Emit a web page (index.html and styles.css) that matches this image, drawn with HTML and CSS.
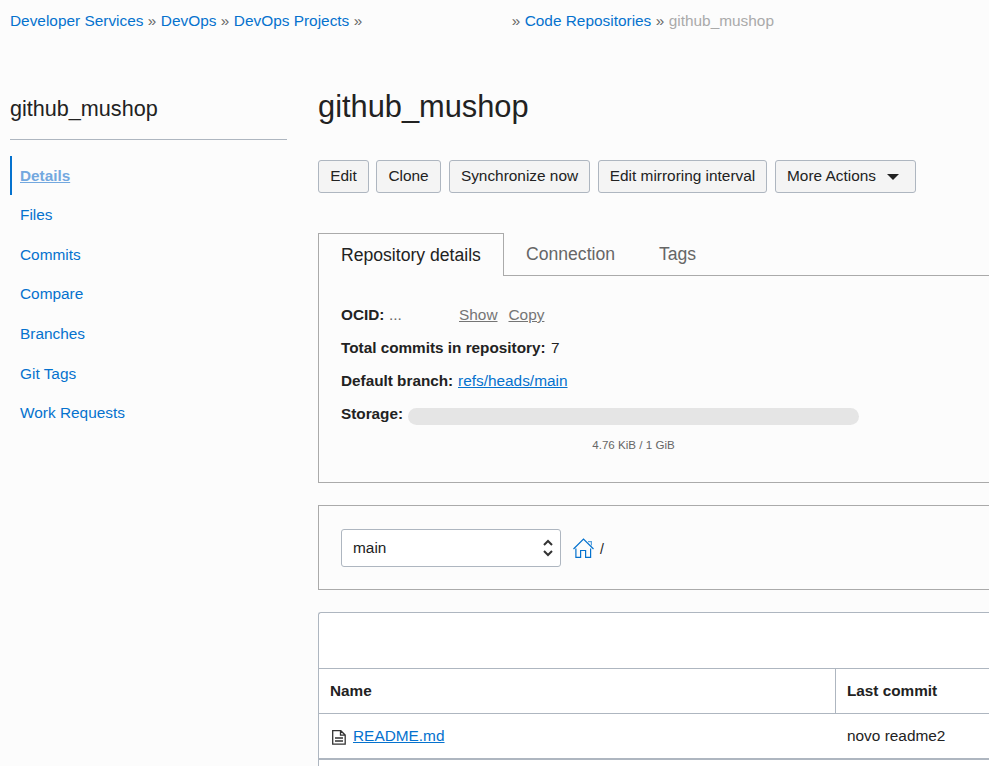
FILE: index.html
```html
<!DOCTYPE html>
<html lang="en">
<head>
<meta charset="utf-8">
<title>github_mushop</title>
<link rel="stylesheet" href="styles.css">
</head>
<body>
<nav class="breadcrumb">
  <a href="#">Developer Services</a><span class="sep">»</span><a href="#">DevOps</a><span class="sep">»</span><a href="#">DevOps Projects</a><span class="sep">»</span><span class="project"></span><span class="sep">»</span><a href="#">Code Repositories</a><span class="sep">»</span><span class="current">github_mushop</span>
</nav>
<div class="layout">
  <aside class="sidebar">
    <h2>github_mushop</h2>
    <ul class="menu">
      <li class="active"><a href="#">Details</a></li>
      <li><a href="#">Files</a></li>
      <li><a href="#">Commits</a></li>
      <li><a href="#">Compare</a></li>
      <li><a href="#">Branches</a></li>
      <li><a href="#">Git Tags</a></li>
      <li><a href="#">Work Requests</a></li>
    </ul>
  </aside>
  <main class="content">
    <h1>github_mushop</h1>
    <div class="actions">
      <button class="edit">Edit</button>
      <button class="clone">Clone</button>
      <button class="sync">Synchronize now</button>
      <button class="mirror">Edit mirroring interval</button>
      <button class="more">More Actions<svg class="caret" width="12" height="6" viewBox="0 0 12 6"><path d="M0 0H12L6 6Z" fill="#222"/></svg></button>
    </div>
    <div class="tabs">
      <div class="tab selected">Repository details</div>
      <div class="tab connection">Connection</div>
      <div class="tab">Tags</div>
    </div>
    <section class="details">
      <div class="row"><b class="ocid">OCID:</b><span class="dots">...</span><a class="muted show" href="#">Show</a><a class="muted" href="#">Copy</a></div>
      <div class="row"><b class="total">Total commits in repository:</b><span>7</span></div>
      <div class="row"><b class="branch">Default branch:</b><a class="link" href="#">refs/heads/main</a></div>
      <div class="row"><b class="storage">Storage:</b><div class="meter"></div></div>
      <div class="usage">4.76 KiB / 1 GiB</div>
    </section>
    <section class="path">
      <div class="select"><span>main</span>
        <svg width="10" height="18" viewBox="0 0 10 18" fill="none" stroke="#333" stroke-width="2"><path d="M1 6L5 2L9 6M1 12L5 16L9 12"/></svg>
      </div>
      <svg class="home" width="21" height="21" viewBox="0 0 21 21" fill="none" stroke="#0572ce" stroke-width="1.2"><path d="M.5 11L10.5 1L20.5 11M2.9 10.5V19.4H7.6V12.5H12.6V19.4H17.6V10.5"/><path d="M15 3.6H18.4V7.5" stroke-opacity=".65"/></svg>
      <span class="slash">/</span>
    </section>
    <section class="files">
      <div class="toolbar"></div>
      <div class="grid head"><div>Name</div><div class="commit">Last commit</div></div>
      <div class="grid file"><div><svg width="14" height="15" viewBox="0 0 14 15" fill="none" stroke="#333" stroke-width="1.3"><path d="M.7 .7H8.8L13.2 5V14.2H.7ZM8.5 .7V5.2H13.2M3 8H11M3 11H11"/></svg><a class="link" href="#">README.md</a></div><div class="commit">novo readme2</div></div>
      <div class="footer"></div>
    </section>
  </main>
</div>
</body>
</html>
```

FILE: styles.css
```css
* { box-sizing: border-box; }
html { overflow: hidden; }
body {
  margin: 0;
  height: 766px;
  overflow: hidden;
  background: #fcfcfc;
  color: #222;
  font: 15.4px/20px "Liberation Sans", Arial, sans-serif;
}
a { color: #0572ce; text-decoration: none; }
h1, h2 { margin: 0; font-weight: 400; }
b { font-size: 15.3px; }

.breadcrumb { display: flex; height: 41px; padding: 11px 0 0 10px; white-space: nowrap; }
.sep { width: 17.4px; text-align: center; color: #666; }
.project { width: 140.6px; }
.current { color: #aaa; }

.layout { display: grid; grid-template-columns: 277px 1fr; column-gap: 31px; padding-left: 10px; }
.sidebar h2 {
  height: 99px;
  padding-top: 55px;
  border-bottom: 1px solid #aeb6c0;
  font-size: 21.6px;
  line-height: 26px;
}
.menu { margin: 16px 0 0; padding: 0; list-style: none; }
.menu li { height: 39.65px; padding: 10px 0 0 10px; }
.menu .active { height: 39px; padding-left: 8px; border-left: 2px solid #0572ce; font-weight: 700; }
.active a { color: #73a8df; font-size: 15.3px; text-decoration: underline; }

.content { min-width: 0; overflow: hidden; }
.content h1 { height: 119px; padding-top: 47px; font-size: 30.8px; line-height: 38px; }
.actions { display: flex; gap: 8px; height: 73px; }
button {
  height: 33px;
  padding: 0 0 2px;
  border: 1px solid #aeb6c0;
  border-radius: 3px;
  background: #f4f4f4;
  color: #222;
  font: inherit;
  white-space: nowrap;
}
.edit { width: 51px; margin-right: -1px; }
.clone { width: 65px; }
.sync { width: 141px; }
.mirror { width: 169px; }
.more { width: 141px; padding-left: 11px; text-align: left; }
.caret { margin-left: 11px; vertical-align: 1px; }

.tabs { display: flex; height: 43px; font-size: 17.6px; color: #666; }
.tab { flex: none; padding: 11px 0 0 22px; border-bottom: 1px solid #aaa; }
.selected { width: 186px; border: 1px solid #aaa; border-bottom: 0; color: #222; }
.connection { width: 133px; }
.tab:last-child { flex: 1; }

.details { height: 207px; padding: 23px 0 0 22px; border: solid #aaa; border-width: 0 0 1px 1px; }
.row { display: flex; height: 33px; padding-top: 6px; white-space: nowrap; }
.row b { flex: none; margin-right: 4px; }
.row .ocid { width: 44px; }
.row .total { width: 206px; }
.row .branch { width: 113px; }
.row .storage { width: 63px; }
.dots { width: 70px; color: #666; }
.muted { color: #757575; text-decoration: underline; }
.show { margin-right: 11px; }
.link { text-decoration: underline; }
.meter { width: 451px; height: 17px; margin-top: 4px; border-radius: 9px; background: #e5e5e5; }
.usage { width: 451px; margin: 4px 0 0 67px; text-align: center; font-size: 11.6px; color: #666; }

.path { display: flex; height: 85px; margin-top: 22px; padding: 23px 0 0 22px; border: solid #aaa; border-width: 1px 0 1px 1px; }
.select {
  display: flex;
  justify-content: space-between;
  align-items: center;
  width: 220px;
  height: 38px;
  padding: 0 7px 0 11px;
  border: 1px solid #aeb6c0;
  border-radius: 3px;
  background: #fff;
}
.home { margin: 9px 0 0 12px; }
.slash { margin: 10px 0 0 6px; font-size: 14px; }

.files { margin-top: 22px; border: solid #aeb6c0; border-width: 1px 0 0 1px; border-radius: 3px 0 0 0; background: #fff; }
.toolbar { height: 55px; }
.grid { display: grid; grid-template-columns: 517px 1fr; border-top: 1px solid #aeb6c0; }
.grid > div { display: flex; padding: 12px 0 0 11px; }
.head { height: 45px; font-weight: 700; font-size: 15.3px; }
.head > div:first-child { border-right: 1px solid #aeb6c0; }
.file { height: 45px; }
.file > div:first-child { padding-left: 13px; }
.file svg { margin: 4px 7px 0 0; }
.footer { height: 20px; border-top: 2px solid #aeb6c0; }
```
